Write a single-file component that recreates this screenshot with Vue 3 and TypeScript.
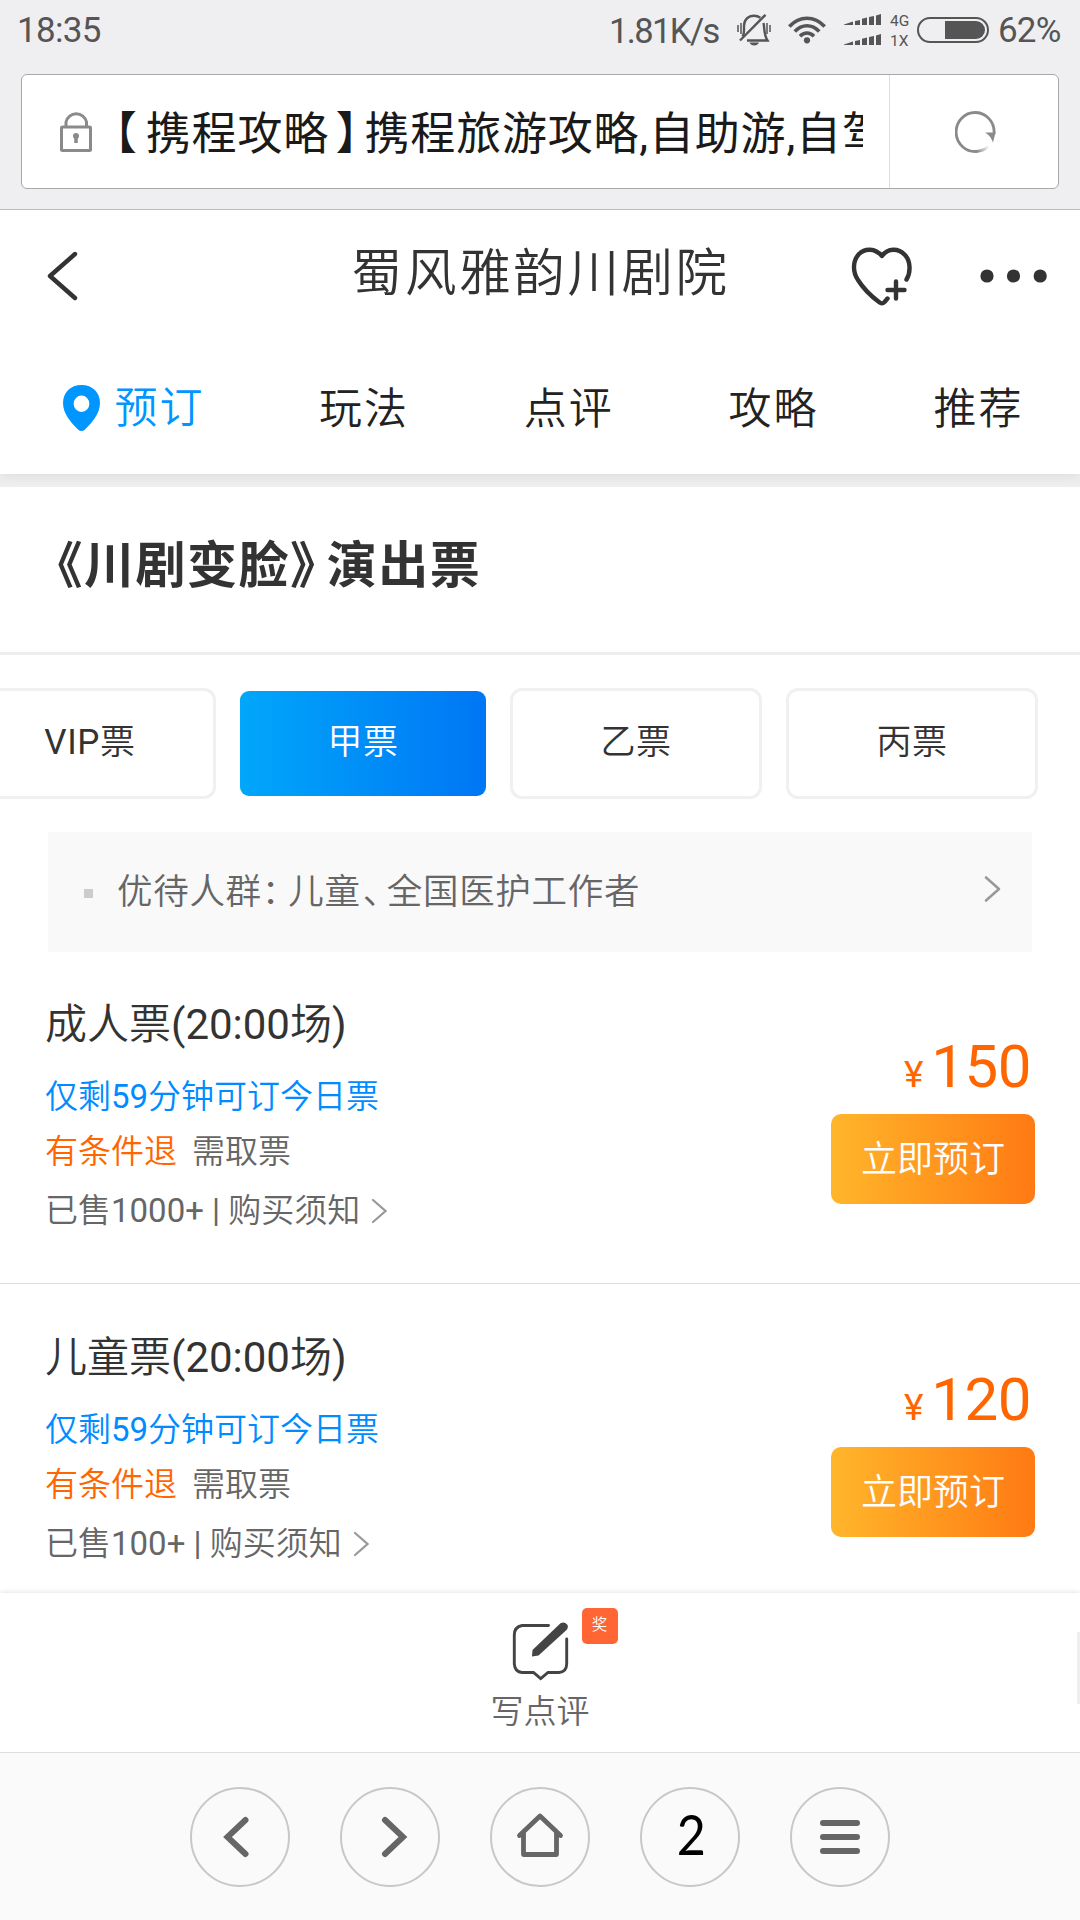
<script setup lang="ts">
interface Ticket {
  name: string
  sold: string
  price: number
}

const tabs: string[] = ['玩法', '点评', '攻略', '推荐']
const kinds: string[] = ['VIP票', '甲票', '乙票', '丙票']
const activeKind = '甲票'
const tickets: Ticket[] = [
  { name: '成人票(20:00场)', sold: '1000+', price: 150 },
  { name: '儿童票(20:00场)', sold: '100+', price: 120 },
]
</script>

<template>
  <div class="screen">
    <header class="chrome">
      <div class="status">
        <span class="clock">18:35</span>
        <span class="speed">1.81K/s</span>
        <svg class="bell" width="34" height="32" viewBox="0 0 34 32" fill="none" stroke="#555" stroke-width="2.4">
          <path d="M5.500 22.500C7.500 20 7 16 7 12C7 5.500 11.500 1.700 17 1.700C19.500 1.700 21.500 2.400 23.300 3.800" />
          <path d="M26.500 9C27.800 15 26.500 20 30.500 26.500H10" />
          <path d="M3 26.500L28.500 .8" />
          <path d="M1 11V18M4 9V20M30 9V20M33 11V18" stroke-width="1.500" />
          <path d="M12.500 28.500H22C20.500 32.500 14 32.500 12.500 28.500Z" fill="#555" stroke="none" />
        </svg>
        <svg class="wifi" width="38" height="28" viewBox="0 0 38 28" fill="none" stroke="#555" stroke-width="3.600">
          <path d="M1.300 10.500C11.500-.6 26.500-.6 36.700 10.500" />
          <path d="M6.800 15.500C14 7.800 24 7.800 31.200 15.500" />
          <path d="M12 20.200C16.200 16 21.800 16 26 20.200" />
          <circle cx="19" cy="24.300" r="3.100" fill="#555" stroke="none" />
        </svg>
        <svg class="signal" width="38" height="32" viewBox="0 0 38 32" fill="#555">
          <path d="M0 10.500L9 7.500V11H0ZM11 7L16 6V11H11ZM18 4.800L23 3.600V11H18ZM25 3L30 2V11H25ZM32 1.500L37 0V11H32Z" />
          <path transform="translate(0 20)" d="M0 10.500L9 7.500V11H0ZM11 7L16 6V11H11ZM18 4.800L23 3.600V11H18ZM25 3L30 2V11H25ZM32 1.500L37 0V11H32Z" />
        </svg>
        <span class="nets"><span>4G</span><span>1X</span></span>
        <svg class="battery" width="72" height="26" viewBox="0 0 72 26">
          <rect x="1" y="1" width="70" height="24" rx="12" fill="none" stroke="#555" stroke-width="2" />
          <path d="M28 4H59A9 9 0 0 1 59 22H28Z" fill="#555" />
        </svg>
        <span class="percent">62%</span>
      </div>
      <div class="address">
        <svg class="lock" width="32" height="42" viewBox="0 0 32 42" fill="none" stroke="#8a8a8a" stroke-width="3">
          <rect x="1.500" y="17" width="29" height="23.500" rx="1" />
          <path d="M6 17V12A10.500 10.500 0 0 1 26.500 12V17" />
          <circle cx="16" cy="26" r="3" fill="#8a8a8a" stroke="none" />
          <path d="M16 26V33" stroke-width="3.500" />
        </svg>
        <div class="page-title"><span class="open">【</span>携程攻略<span class="close">】</span>携程旅游攻略,自助游,自驾</div>
        <div class="reload">
          <svg width="42" height="42" viewBox="0 0 42 42">
            <defs>
              <linearGradient id="fade" gradientUnits="userSpaceOnUse" x1="22" y1="40" x2="34" y2="35">
                <stop offset="0" stop-color="#8a8a8a" />
                <stop offset="1" stop-color="#8a8a8a" stop-opacity="0" />
              </linearGradient>
            </defs>
            <path d="M39 23A19 19.500 0 1 0 22 40.400" fill="none" stroke="#8a8a8a" stroke-width="2.800" />
            <path d="M21 40.500Q29 40 34 35" fill="none" stroke="url(#fade)" stroke-width="2.800" />
            <path d="M30 21.500H40.500L38 31.500Q35.500 24.500 30 21.500Z" fill="#8a8a8a" />
          </svg>
        </div>
      </div>
    </header>

    <nav class="top">
      <div class="bar">
        <svg class="back" width="32" height="50" viewBox="0 0 32 50" fill="none" stroke="#333" stroke-width="4.400" stroke-linecap="round" stroke-linejoin="round">
          <path d="M28 3L3 25L28 47" />
        </svg>
        <h1>蜀风雅韵川剧院</h1>
        <svg class="heart" width="62" height="60" viewBox="0 0 62 60" fill="none" stroke="#333" stroke-width="4.400" stroke-linecap="round" stroke-linejoin="round">
          <path d="M55.500 32.500C60 25 59.500 14 54 8C47 .8 37 1 31 9C24 1 14 1 8 7C1.500 14 1.500 25 7 33C12 41 20 49 28 55C30.500 57 31.500 57 33.500 55L36.500 51.500" />
          <path d="M36.500 43H53.500M45 34.500V51.500" />
        </svg>
        <svg class="more" width="68" height="14" viewBox="0 0 68 14" fill="#333">
          <circle cx="7" cy="7" r="6.600" /><circle cx="33.500" cy="7" r="6.600" /><circle cx="60.200" cy="7" r="6.600" />
        </svg>
      </div>
      <div class="tabs">
        <a class="tab current">
          <svg width="37" height="46" viewBox="0 0 37 46"><path fill="#0096ff" fill-rule="evenodd" d="M18.500 0C7.500 0 0 7.500 0 18C0 29 8.500 38 15.500 45Q18.500 47 21.500 45C28.500 38 37 29 37 18C37 7.500 29.500 0 18.500 0ZM18.500 10.500A7.800 8.200 0 1 1 18.500 27A7.800 8.200 0 1 1 18.500 10.500Z" /></svg>
          <span>预订</span>
        </a>
        <a v-for="t in tabs" :key="t" class="tab">{{ t }}</a>
      </div>
    </nav>
    <div class="band"></div>

    <main>
      <h2>《川剧变脸<span class="close">》</span>演出票</h2>
      <div class="kinds">
        <div v-for="k in kinds" :key="k" class="kind" :class="{ active: k === activeKind }">{{ k }}</div>
      </div>
      <div class="notice">
        <i class="bullet"></i>
        <p>优待人群<span class="colon">：</span>儿童<span class="comma">、</span>全国医护工作者</p>
        <svg width="18" height="28" viewBox="0 0 18 28" fill="none" stroke="#999" stroke-width="2.600" stroke-linecap="round" stroke-linejoin="round"><path d="M3 2.500L16 14L3 25.500" /></svg>
      </div>
      <section v-for="t in tickets" :key="t.name" class="ticket">
        <div class="info">
          <h3>{{ t.name }}</h3>
          <p class="left">仅剩59分钟可订今日票</p>
          <p class="rules"><span class="refund">有条件退</span><span>需取票</span></p>
          <p class="sold">
            <span>已售{{ t.sold }} | 购买须知</span>
            <svg width="16" height="26" viewBox="0 0 16 26" fill="none" stroke="#999" stroke-width="2.200" stroke-linecap="round"><path d="M2 2L14.500 13L2 24" /></svg>
          </p>
        </div>
        <div class="buy">
          <div class="price"><span class="yen">¥</span>{{ t.price }}</div>
          <button>立即预订</button>
        </div>
      </section>
    </main>

    <div class="review">
      <div class="write">
        <svg width="58" height="60" viewBox="0 0 58 60">
          <path d="M36.500 3.500H10Q2.300 5 2.300 13V42Q3 50 10 50.500H21.500L28.700 56.500L36 50.500H47Q54.500 50 54.700 42V17" fill="none" stroke="#444" stroke-width="2.900" stroke-linecap="round" />
          <path d="M20.500 28L48.500 1.300Q53-1 55.500 3Q56.500 5.500 54.500 8L26.500 33.500L20 34.500Z" fill="#444" />
        </svg>
        <span class="badge">奖</span>
        <span class="label">写点评</span>
      </div>
      <i class="stub"></i>
    </div>

    <footer>
      <span class="round"><svg width="50" height="50" viewBox="0 0 50 50"><path d="M30.500 8L12.500 25L30.500 42" /></svg></span>
      <span class="round"><svg width="50" height="50" viewBox="0 0 50 50"><path d="M20 8L38 25L20 42" /></svg></span>
      <span class="round"><svg class="home" width="50" height="50" viewBox="0 0 50 50"><path d="M4.500 23.500L25 4L45.500 23.500M8.500 21V42.500H41.500V21" /></svg></span>
      <span class="round"><span class="count">2</span></span>
      <span class="round"><svg width="50" height="50" viewBox="0 0 50 50"><path d="M8 11H42M8 25H42M8 39H42" /></svg></span>
    </footer>
  </div>
</template>

<style>
body {
  margin: 0;
  background: #fff;
}
</style>

<style scoped>
* {
  box-sizing: border-box;
}
h1, h2, h3, p {
  margin: 0;
  font-weight: 400;
}
svg {
  display: block;
  flex: none;
}
.screen {
  width: 1080px;
  height: 1920px;
  overflow: hidden;
  display: flex;
  flex-direction: column;
  background: #fff;
  color: #333;
  font-family: Roboto, 'Noto Sans CJK SC DemiLight', 'Noto Sans CJK SC', sans-serif;
  font-weight: 400;
  white-space: nowrap;
}
.chrome {
  flex: none;
  height: 210px;
  background: #efeff1;
  border-bottom: 1px solid #bbbbbd;
}
.status {
  height: 74px;
  display: flex;
  align-items: flex-start;
  color: #555;
  font-size: 35px;
  line-height: 62px;
}
.clock {
  width: 593px;
  padding-left: 17px;
  letter-spacing: -0.7px;
}
.speed {
  width: 127px;
  padding-left: 16px;
  font-size: 34.500px;
  letter-spacing: -1.600px;
}
.bell {
  margin: 14px 17px 0 17px;
}
.wifi {
  margin: 16px 18px 0 0;
}
.signal {
  margin: 14px 8px 0 0;
}
.nets {
  display: flex;
  flex-direction: column;
  width: 27px;
  padding-top: 11px;
  font-size: 15.500px;
  line-height: 20px;
}
.battery {
  margin: 17px 9px 0 0;
}
.percent {
  font-size: 35px;
  letter-spacing: -0.8px;
}
.address {
  display: flex;
  align-items: center;
  width: 1038px;
  height: 115px;
  margin-left: 21px;
  background: #fff;
  border: 1px solid #a8a8aa;
  border-radius: 6px;
}
.lock {
  margin: 0 0 2px 38px;
}
.page-title {
  width: 771px;
  margin-top: 6px;
  overflow: hidden;
  color: #1a1a1a;
  font-family: Roboto, 'Noto Sans CJK SC', sans-serif;
  font-size: 45px;
  line-height: 70px;
  letter-spacing: 0.8px;
}
.page-title .open {
  margin-right: 8px;
}
.page-title .close {
  margin-left: 6.500px;
  letter-spacing: -16px;
}
.reload {
  display: flex;
  align-items: center;
  justify-content: center;
  flex: 1;
  height: 113px;
  margin-left: 26px;
  padding-left: 3px;
  border-left: 1px solid #ddd;
}
.top {
  position: relative;
  z-index: 1;
  flex: none;
  height: 264px;
  background: #fff;
  box-shadow: 0 0 12px rgba(0, 0, 0, 0.1);
  clip-path: inset(0 0 -13px 0);
}
.bar {
  display: flex;
  align-items: center;
  height: 132px;
}
.back {
  margin: 0 0 0 47px;
}
h1 {
  width: 500px;
  margin-left: 272px;
  margin-bottom: 4px;
  font-size: 51.500px;
  line-height: 80px;
  letter-spacing: 2.600px;
}
.heart {
  margin-top: 1px;
}
.more {
  margin: 0 0 0 66.500px;
}
.tabs {
  display: flex;
  height: 132px;
  padding-left: 63px;
  color: #222;
  font-size: 43px;
  line-height: 134px;
  letter-spacing: 2px;
}
.tab {
  flex: none;
  width: 204.800px;
}
.current {
  display: flex;
  align-items: center;
  gap: 14.500px;
  width: 256px;
  color: #0096ff;
}
.current svg {
  margin-bottom: 1px;
}
.band {
  flex: none;
  height: 13px;
  background: #eee;
}
main {
  flex: none;
  height: 1106px;
  overflow: hidden;
}
h2 {
  height: 168px;
  padding-left: 32.500px;
  border-bottom: 3px solid #eee;
  font-family: Roboto, 'Noto Sans CJK SC', sans-serif;
  font-size: 50px;
  font-weight: 700;
  line-height: 159px;
  letter-spacing: 1.500px;
}
h2 .close {
  letter-spacing: -13.200px;
}
.kinds {
  display: flex;
  gap: 24px;
  margin: 33px 0 33px -36px;
}
.kind {
  flex: none;
  width: 252px;
  height: 111px;
  border: 3px solid #f0f0f0;
  border-radius: 12px;
  font-size: 35px;
  line-height: 104px;
  letter-spacing: 0.6px;
  text-align: center;
}
.kind.active {
  width: 246px;
  height: 105px;
  margin: 3px 0;
  border: 0;
  border-radius: 9px;
  background: linear-gradient(90deg, #00a7fa, #0076f5);
  color: #fff;
}
.notice {
  display: flex;
  align-items: center;
  width: 984px;
  height: 120px;
  margin-left: 48px;
  padding-left: 36px;
  background: #f9f9f9;
  color: #666;
}
.notice svg {
  margin-bottom: 6px;
}
.bullet {
  width: 9px;
  height: 9px;
  margin-top: 3px;
  background: #ccc;
}
.notice p {
  width: 866px;
  margin-left: 24px;
  font-size: 35.500px;
  line-height: 60px;
  letter-spacing: 0.7px;
}
.colon {
  letter-spacing: -9px;
}
.comma {
  margin-left: 2px;
  letter-spacing: -11.500px;
}
.ticket {
  display: flex;
  justify-content: space-between;
  height: 333px;
  padding: 43px 45px 0 45px;
  border-bottom: 1px solid #ddd;
}
.ticket:first-of-type {
  height: 332px;
  padding-top: 42px;
}
h3 {
  font-size: 42px;
  line-height: 62px;
}
.left, .rules, .sold {
  font-size: 33px;
  color: #666;
}
.left {
  margin-top: 13px;
  line-height: 56px;
  color: #008cff;
}
.rules {
  margin-top: 1px;
  line-height: 52px;
}
.refund {
  margin-right: 15px;
  color: #ff6600;
}
.sold {
  display: flex;
  align-items: center;
  gap: 11px;
  margin-top: 5px;
  line-height: 56px;
}
.buy {
  display: flex;
  flex-direction: column;
  align-items: flex-end;
}
.price {
  margin: 37px 4px 3px 0;
  color: #ff6600;
  font-size: 60px;
  line-height: 72px;
  letter-spacing: -0.5px;
}
.yen {
  margin-right: 8.500px;
  font-size: 37px;
}
button {
  flex: none;
  width: 204px;
  height: 90px;
  padding: 0 0 6px;
  border: 0;
  border-radius: 10px;
  background: linear-gradient(90deg, #ffb62b, #ff7a13);
  color: #fff;
  font-family: inherit;
  font-size: 36px;
  font-weight: 400;
}
.review {
  position: relative;
  z-index: 1;
  display: flex;
  flex: none;
  align-items: flex-start;
  justify-content: center;
  height: 159px;
  background: #fff;
  box-shadow: 0 0 6px rgba(0, 0, 0, 0.14);
}
.write {
  position: relative;
  display: flex;
  flex-direction: column;
  align-items: center;
  padding-top: 29px;
}
.write svg {
  margin: 0 0 2px 2px;
}
.badge {
  position: absolute;
  top: 15px;
  left: 91px;
  width: 36px;
  height: 36px;
  border-radius: 5px;
  background: #ff6633;
  color: #fff;
  font-size: 15.500px;
  line-height: 34px;
  text-align: center;
}
.label {
  color: #666;
  font-size: 33px;
  line-height: 55px;
}
.stub {
  position: absolute;
  top: 39px;
  right: 0;
  width: 3px;
  height: 72px;
  background: #eee;
}
footer {
  position: relative;
  z-index: 2;
  display: flex;
  flex: none;
  gap: 50px;
  height: 168px;
  padding: 34px 0 0 190px;
  background: #fafafa;
  border-top: 1px solid #ddd;
}
.round {
  display: flex;
  align-items: center;
  justify-content: center;
  width: 100px;
  height: 100px;
  border: 2px solid #c8c8c8;
  border-radius: 50%;
}
.round svg {
  fill: none;
  stroke: #666;
  stroke-width: 6;
  stroke-linecap: round;
}
.round .home {
  stroke-width: 4.800;
  stroke-linejoin: round;
}
.count {
  padding: 0 0 9px 3px;
  color: #000;
  font-family: Lato, sans-serif;
  font-size: 57px;
  line-height: 70px;
  transform: scaleX(0.88);
}
</style>
